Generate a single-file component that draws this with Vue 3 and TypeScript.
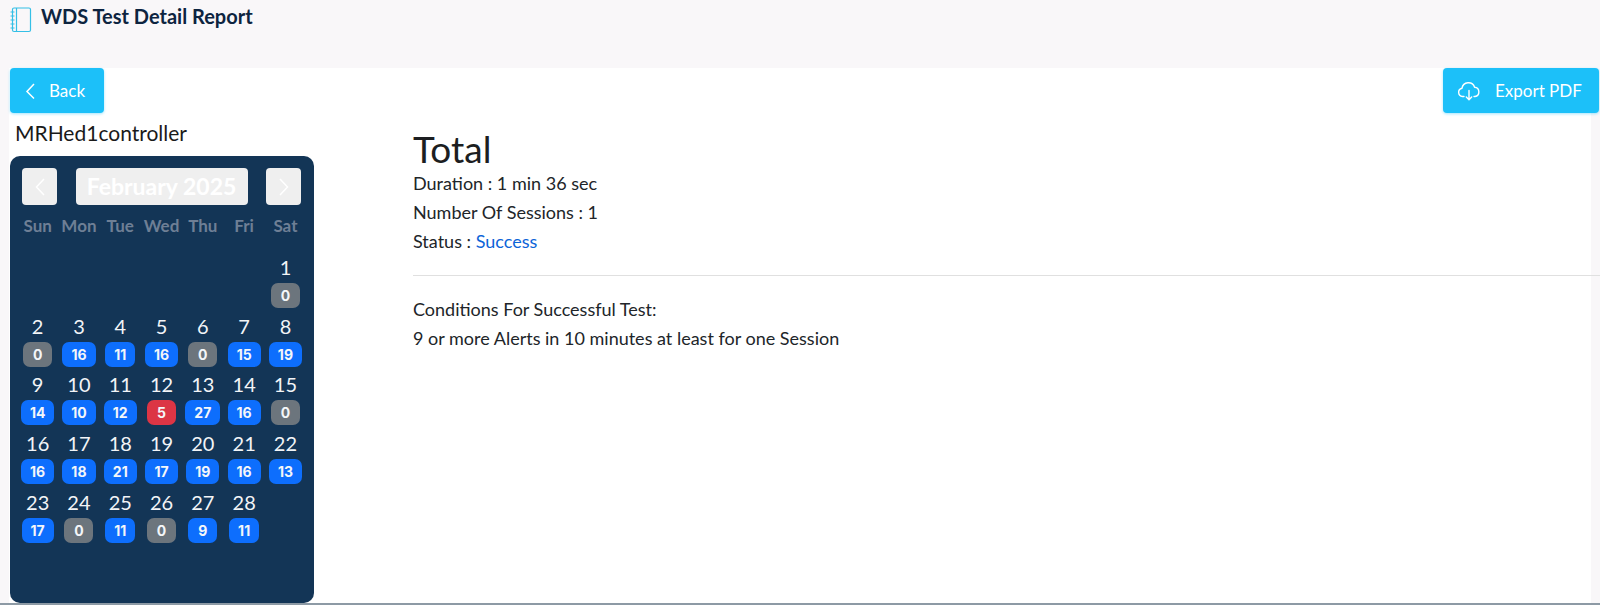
<script setup lang="ts">
interface Day {
  day: number
  count: number
}

const weekdays = ['Sun', 'Mon', 'Tue', 'Wed', 'Thu', 'Fri', 'Sat']
const counts = [0, 0, 16, 11, 16, 0, 15, 19, 14, 10, 12, 5, 27, 16, 0, 16, 18, 21, 17, 19, 16, 13, 17, 0, 11, 0, 9, 11]
const days: Day[] = counts.map((count, i) => ({ day: i + 1, count }))

// February 2025 starts on a Saturday
const leading = 6

const badgeClass = (count: number) => {
  if (count === 0) return 'zero'
  if (count < 9) return 'fail'
  return 'ok'
}
</script>

<template>
  <div class="page">
    <header class="topbar">
      <svg class="book" width="22" height="26" viewBox="0 0 22 26" fill="none" stroke="#35bfe6" stroke-width="1.2">
        <rect x="2.5" y="1" width="18" height="23.5" rx="1.5" />
        <path d="M6.5 1v23.5" />
        <path d="M0.5 5h4M0.5 9h4M0.5 13h4M0.5 17h4M0.5 21h4" />
      </svg>
      <h1>WDS Test Detail Report</h1>
    </header>

    <main class="panel">
      <div class="actions">
        <button class="btn back">
          <svg width="12" height="18" viewBox="0 0 12 18" fill="none" stroke="#fff" stroke-width="1.5">
            <path d="M10 2 3 9.5l7 7" />
          </svg>
          Back
        </button>
        <button class="btn export">
          <svg width="24" height="22" viewBox="0 0 24 22" fill="none" stroke="#fff" stroke-width="1.4" stroke-linecap="round" stroke-linejoin="round">
            <path d="M7 16.5H5.5A4.2 4.2 0 0 1 5 8.2 6.5 6.5 0 0 1 17.6 7.2 4.7 4.7 0 0 1 18 16.5h-1" />
            <path d="M12 10.5v9M9.3 17l2.7 2.7 2.7-2.7" />
          </svg>
          Export PDF
        </button>
      </div>

      <div class="columns">
        <section class="left">
          <div class="device">MRHed1controller</div>
          <div class="calendar">
            <div class="cal-head">
              <button class="nav">
                <svg width="12" height="20" viewBox="0 0 12 20" fill="none" stroke="#fff" stroke-width="1.5"><path d="M10 2 2.5 10l7.5 8" /></svg>
              </button>
              <div class="month">February 2025</div>
              <button class="nav">
                <svg width="12" height="20" viewBox="0 0 12 20" fill="none" stroke="#fff" stroke-width="1.5"><path d="M2 2l7.5 8L2 18" /></svg>
              </button>
            </div>
            <div class="grid weekdays">
              <div v-for="w in weekdays" :key="w" class="weekday">{{ w }}</div>
            </div>
            <div class="grid days">
              <div v-for="n in leading" :key="'blank' + n" />
              <div v-for="d in days" :key="d.day" class="cell">
                <div class="num">{{ d.day }}</div>
                <span class="badge" :class="badgeClass(d.count)">{{ d.count }}</span>
              </div>
            </div>
          </div>
        </section>

        <section class="detail">
          <h2>Total</h2>
          <p>Duration : 1 min 36 sec</p>
          <p>Number Of Sessions : 1</p>
          <p>Status : <span class="success">Success</span></p>
          <hr />
          <p>Conditions For Successful Test:</p>
          <p>9 or more Alerts in 10 minutes at least for one Session</p>
        </section>
      </div>
    </main>
  </div>
</template>

<style>
html,
body {
  margin: 0;
  background: #f9f7f9;
}
</style>

<style scoped>
.page {
  height: 605px;
  box-sizing: border-box;
  overflow: hidden;
  font-family: Lato, 'Open Sans', sans-serif;
  color: #1c1e21;
  border-bottom: 2px solid #8d9aa5;
}

.topbar {
  height: 68px;
  box-sizing: border-box;
  display: flex;
  align-items: flex-start;
  gap: 9px;
  padding: 5px 0 0 10px;
}

.book {
  margin-top: 2px;
}

h1 {
  margin: 0;
  font-size: 20px;
  line-height: 22px;
  font-weight: 700;
  color: #0d2440;
}

.panel {
  height: 535px;
  margin: 0 9px 0 9px;
  background: #fff;
}

.actions {
  display: flex;
  justify-content: space-between;
  padding-left: 1px;
}

.btn {
  height: 45px;
  display: flex;
  align-items: center;
  border: none;
  border-radius: 4px;
  background: #1cc0f9;
  color: #fff;
  font: inherit;
  font-size: 17px;
  box-shadow: 0 1px 3px rgba(28, 192, 249, 0.4);
}

.back {
  width: 94px;
  gap: 13px;
  padding: 0 0 0 14px;
}

.export {
  width: 156px;
  gap: 14px;
  padding: 0 0 0 14px;
  margin-right: -9px;
  margin-left: auto;
  transform: translateX(-1px);
}

.columns {
  display: flex;
}

.left {
  width: 404px;
  flex: none;
  padding-left: 1px;
  box-sizing: border-box;
}

.device {
  height: 43px;
  padding-left: 5px;
  font-size: 21px;
  line-height: 40px;
  color: #1a1a1a;
}

.calendar {
  width: 304px;
  height: 447px;
  box-sizing: border-box;
  padding: 12px 8px 0 7px;
  border-radius: 10px;
  background: #133556;
}

.cal-head {
  display: flex;
  justify-content: space-between;
  padding: 0 5px;
}

.nav {
  width: 35px;
  height: 37px;
  padding: 0;
  display: flex;
  align-items: center;
  justify-content: center;
  border: none;
  border-radius: 4px;
  background: #efefef;
}

.month {
  width: 172px;
  height: 37px;
  border-radius: 4px;
  background: #efefef;
  color: #fff;
  font-size: 23px;
  font-weight: 700;
  line-height: 37px;
  text-align: center;
}

.grid {
  display: grid;
  grid-template-columns: repeat(7, 41.3px);
}

.weekdays {
  margin-top: 10px;
}

.weekday {
  height: 22px;
  color: #6e7f95;
  font-size: 17px;
  font-weight: 700;
  line-height: 22px;
  text-align: center;
}

.days {
  grid-auto-rows: 58.7px;
  margin-top: 15px;
}

.cell {
  display: flex;
  flex-direction: column;
  align-items: center;
}

.num {
  height: 31px;
  color: #f2f4f7;
  font-size: 20px;
  line-height: 31px;
}

.badge {
  height: 25px;
  min-width: 29px;
  box-sizing: border-box;
  padding: 0 9px;
  border-radius: 7px;
  color: #f4f6f9;
  font-family: Inter, sans-serif;
  font-size: 14px;
  font-weight: 700;
  line-height: 25px;
  text-align: center;
}

.badge.ok {
  background: #0d6efd;
}

.badge.zero {
  background: #6c757d;
}

.badge.fail {
  background: #dc3545;
}

.detail {
  flex: 1;
  margin-right: -9px;
}

h2 {
  margin: 15px 0 0;
  font-size: 37px;
  line-height: 41px;
  font-weight: 400;
  color: #1c1e21;
}

p {
  margin: 0;
  font-size: 18px;
  line-height: 29px;
  color: #212529;
}

.success {
  color: #0d64d8;
}

hr {
  margin: 19px 0 19px;
  border: none;
  border-top: 1px solid #e0e0e0;
}
</style>
